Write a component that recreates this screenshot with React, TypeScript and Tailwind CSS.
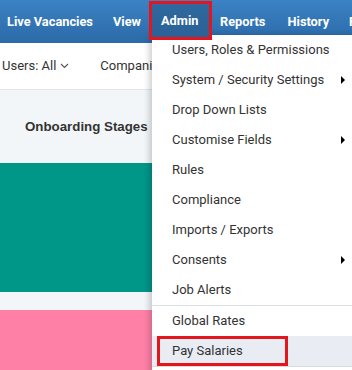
import React from "react";

const menuItems: { label: string; arrow?: boolean }[] = [
  { label: "Users, Roles & Permissions" },
  { label: "System / Security Settings", arrow: true },
  { label: "Drop Down Lists" },
  { label: "Customise Fields", arrow: true },
  { label: "Rules" },
  { label: "Compliance" },
  { label: "Imports / Exports" },
  { label: "Consents", arrow: true },
  { label: "Job Alerts" },
];

function Arrow() {
  return (
    <span className="absolute left-[189px] top-1/2 -translate-y-1/2 w-0 h-0 border-l-[4px] border-l-black border-y-[4px] border-y-transparent" />
  );
}

export default function App() {
  return (
    <div
      className="relative w-[352px] h-[370px] overflow-hidden bg-[#f3f6f9]"
      style={{ fontFamily: "Roboto, 'Liberation Sans', sans-serif" }}
    >
      {/* Top nav */}
      <div className="flex items-center h-[43px] bg-gradient-to-b from-[#3b82c4] to-[#2c6aa8] text-white font-bold text-[12.8px] whitespace-nowrap">
        <span className="shrink-0 ml-[7px]">Live Vacancies</span>
        <span className="shrink-0 ml-[20px]">View</span>
        <span className="shrink-0 relative z-20 self-start mt-[1px] ml-[8px] w-[63px] h-[39px] flex items-center pl-[9px] border-[3px] border-[#e3161e] bg-gradient-to-b from-[#30699f] to-[#2a6196]">
          Admin
        </span>
        <span className="shrink-0 ml-[8px]">Reports</span>
        <span className="shrink-0 ml-[22px]">History</span>
        <span className="shrink-0 ml-[20px]">F</span>
      </div>

      {/* Filter bar */}
      <div className="flex items-center h-[47px] bg-white border-b border-[#e3e7ec] text-[13px] text-[#333] whitespace-nowrap">
        <span className="ml-[2px] flex items-center">
          Users: All
          <svg className="ml-[4px]" width="9" height="6" viewBox="0 0 9 6" fill="none">
            <path d="M1 1l3.5 3.5L8 1" stroke="#555" strokeWidth="1.1" />
          </svg>
        </span>
        <span className="ml-[31px]">Companies: All</span>
      </div>

      {/* Content */}
      <div className="h-[73px] flex items-center pl-[25px]">
        <span
          className="font-bold text-[13.3px] text-[#333]"
          style={{ fontFamily: "'Liberation Sans', Arial, sans-serif" }}
        >
          Onboarding Stages
        </span>
      </div>
      <div className="h-[129px] bg-[#009688]" />
      <div className="h-[18px]" />
      <div className="h-[60px] bg-[#ff80a7]" />

      {/* Dropdown menu */}
      <div className="absolute left-[152px] top-[35px] w-[220px] bg-white z-10 shadow-[-3px_0_6px_rgba(0,0,0,0.18)] text-[13px] text-[#333] whitespace-nowrap">
        {menuItems.map((it) => (
          <div key={it.label} className="relative h-[30px] flex items-center pl-[20px]">
            {it.label}
            {it.arrow && <Arrow />}
          </div>
        ))}
        <div className="h-px bg-[#dcdfe4]" />
        <div className="h-[30px] flex items-center pl-[20px]">Global Rates</div>
        <div className="relative h-[30px] flex items-center pl-[20px] bg-[#e9ecf3]">
          <span className="absolute left-[5px] top-0 w-[131px] h-[30px] border-[3px] border-[#e3161e]" />
          Pay Salaries
        </div>
        <div className="h-px bg-[#d6d9de]" />
        <div className="h-[10px]" />
      </div>
    </div>
  );
}
